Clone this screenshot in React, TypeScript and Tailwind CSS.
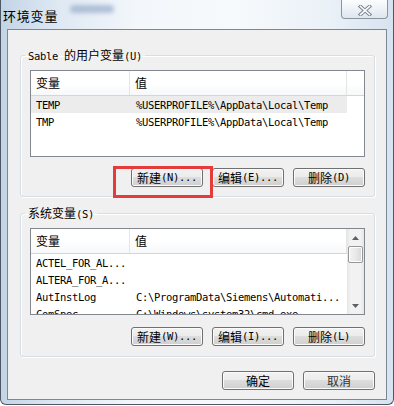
import React from "react";

const MONO = "font-['DejaVu_Sans_Mono',monospace] text-[10.5px] tracking-[-0.32px]";
const CJK = "font-['Noto_Sans_CJK_SC',sans-serif] text-[12px]";

function T({ s }: { s: string }) {
  const parts = s.match(/[\x00-\x7f]+|[^\x00-\x7f]+/g) || [];
  return (
    <>
      {parts.map((p, i) =>
        /^[\x00-\x7f]+$/.test(p) ? (
          <span key={i} className={MONO + " whitespace-pre"}>
            {p}
          </span>
        ) : (
          <span key={i} className={CJK}>
            {p}
          </span>
        )
      )}
    </>
  );
}

function Btn({ label, faded }: { label: string; faded?: boolean }) {
  return (
    <div
      className={
        "h-[19px] w-[72px] rounded-[3px] border border-[#707070] bg-[linear-gradient(180deg,#f2f2f2_0%,#ebebeb_50%,#dddddd_50%,#cfcfcf_100%)] shadow-[inset_0_0_0_1px_#fbfbfb] flex items-center justify-center leading-[17px] " +
        (faded ? "text-[#333]" : "text-black")
      }
    >
      <T s={label} />
    </div>
  );
}

type Row = [string, string];

function ListView({ rows, selected, scroll }: { rows: Row[]; selected?: number; scroll?: boolean }) {
  return (
    <div className="h-[87px] border border-[#828790] bg-white flex overflow-hidden">
      <div className="flex-1 flex flex-col overflow-hidden">
        <div className="h-[25px] shrink-0 flex border-b border-[#d5d5d5] bg-[linear-gradient(180deg,#ffffff_0%,#ffffff_50%,#f7f8fa_100%)]">
          <div className="w-[99px] border-r border-[#e5e5e5] pl-[5px] flex items-center leading-[24px]">
            <T s="变量" />
          </div>
          <div className="w-[217px] border-r border-[#e5e5e5] pl-[5px] flex items-center leading-[24px]">
            <T s="值" />
          </div>
          <div className="flex-1" />
        </div>
        {rows.map((r, i) => (
          <div key={i} className="h-[17px] shrink-0 flex items-center text-black">
            <div className={"flex h-[17px] w-[316px] items-center " + (i === selected ? "bg-[#ececec]" : "")}>
              <div className="w-[99px] pl-[5px] overflow-hidden whitespace-nowrap leading-[17px]">
                <T s={r[0]} />
              </div>
              <div className="w-[217px] pl-[6px] overflow-hidden whitespace-nowrap leading-[17px]">
                <T s={r[1]} />
              </div>
            </div>
          </div>
        ))}
      </div>
      {scroll && (
        <div className="w-[17px] shrink-0 flex flex-col bg-[linear-gradient(90deg,#e6e6e6_0%,#f2f2f2_20%,#f2f2f2_80%,#e6e6e6_100%)]">
          <div className="h-[17px] flex items-center justify-center">
            <svg width="7" height="4" viewBox="0 0 7 4">
              <path d="M0 4 L3.5 0 L7 4 Z" fill="#606060" />
            </svg>
          </div>
          <div className="mx-[1px] h-[17px] rounded-[2px] border border-[#979797] bg-[linear-gradient(90deg,#f3f3f3_0%,#e9e9e9_50%,#d8d8d8_100%)] shadow-[inset_0_0_0_1px_#fdfdfd]" />
          <div className="flex-1" />
          <div className="h-[17px] flex items-center justify-center">
            <svg width="7" height="4" viewBox="0 0 7 4">
              <path d="M0 0 L7 0 L3.5 4 Z" fill="#606060" />
            </svg>
          </div>
        </div>
      )}
    </div>
  );
}

function Group({ title, children }: { title: string; children: React.ReactNode }) {
  return (
    <fieldset className="ml-[12px] mr-[11px] rounded-[3px] border border-[#d5dfe5] shadow-[inset_1px_1px_0_#ffffff,1px_1px_0_#ffffff] px-[9px] pt-[7px]">
      <legend className="ml-[-5px] px-[3px] leading-[14px] text-black">
        <T s={title} />
      </legend>
      {children}
    </fieldset>
  );
}

export default function App() {
  const userRows: Row[] = [
    ["TEMP", "%USERPROFILE%\\AppData\\Local\\Temp"],
    ["TMP", "%USERPROFILE%\\AppData\\Local\\Temp"],
  ];
  const sysRows: Row[] = [
    ["ACTEL_FOR_AL...", ""],
    ["ALTERA_FOR_A...", ""],
    ["AutInstLog", "C:\\ProgramData\\Siemens\\Automati..."],
    ["ComSpec", "C:\\Windows\\system32\\cmd.exe"],
  ];
  return (
    <div className="relative w-[394px] h-[406px] overflow-hidden bg-white">
      <div className="h-[405px] w-[394px] border-x border-b border-[#4d5866] rounded-b-[6px] bg-[linear-gradient(90deg,#c3d4e6_0%,#dfe9f3_15%,#f3f7fb_35%,#f7fafc_60%,#e9f0f7_85%,#d6e3f0_100%)] flex flex-col">
        <div className="h-[29px] shrink-0 flex items-start">
          <div className="ml-[2px] mt-[8px] text-[13px] tracking-[0.8px] leading-[15px] font-['Noto_Sans_CJK_SC',sans-serif] text-black">
            环境变量
          </div>
          <div className="ml-[12px] mt-[5px] h-[8px] w-[44px] rounded-full bg-[#8aa0c2]/60 blur-[2px]" />
          <div className="ml-auto mr-[5px] h-[19px] w-[47px] rounded-b-[4px] border border-t-0 border-[#8a95a2] bg-[linear-gradient(180deg,#fbfcfd_0%,#eef2f6_50%,#dfe6ee_100%)] flex items-center justify-center pt-[2px]">
            <svg width="14" height="11" viewBox="0 0 14 11">
              <path d="M2.5 1.5 L11.5 9.5 M11.5 1.5 L2.5 9.5" stroke="#7a8695" strokeWidth="3.6" strokeLinecap="square" />
              <path d="M2.5 1.5 L11.5 9.5 M11.5 1.5 L2.5 9.5" stroke="#ffffff" strokeWidth="1.6" strokeLinecap="square" />
            </svg>
          </div>
        </div>
        <div className="mx-[6px] h-[371px] shrink-0 border border-[#7b8794] bg-[#f0f0f0] flex flex-col">
          <div className="mt-[17px]">
            <Group title="Sable 的用户变量(U)">
              <ListView rows={userRows} selected={0} />
              <div className="mt-[11px] mb-[9px] flex justify-end gap-[9px]">
                <Btn label="新建(N)..." />
                <Btn label="编辑(E)..." />
                <Btn label="删除(D)" />
              </div>
            </Group>
          </div>
          <div className="mt-[8px]">
            <Group title="系统变量(S)">
              <ListView rows={sysRows} scroll />
              <div className="mt-[12px] mb-[10px] flex justify-end gap-[9px]">
                <Btn label="新建(W)..." />
                <Btn label="编辑(I)..." />
                <Btn label="删除(L)" />
              </div>
            </Group>
          </div>
          <div className="mt-[14px] mr-[11px] flex justify-end gap-[9px]">
            <Btn label="确定" />
            <Btn label="取消" faded />
          </div>
        </div>
      </div>
      <div className="absolute left-[113px] top-[166px] h-[32px] w-[100px] border-[3px] border-[#e63b3b]" />
    </div>
  );
}
